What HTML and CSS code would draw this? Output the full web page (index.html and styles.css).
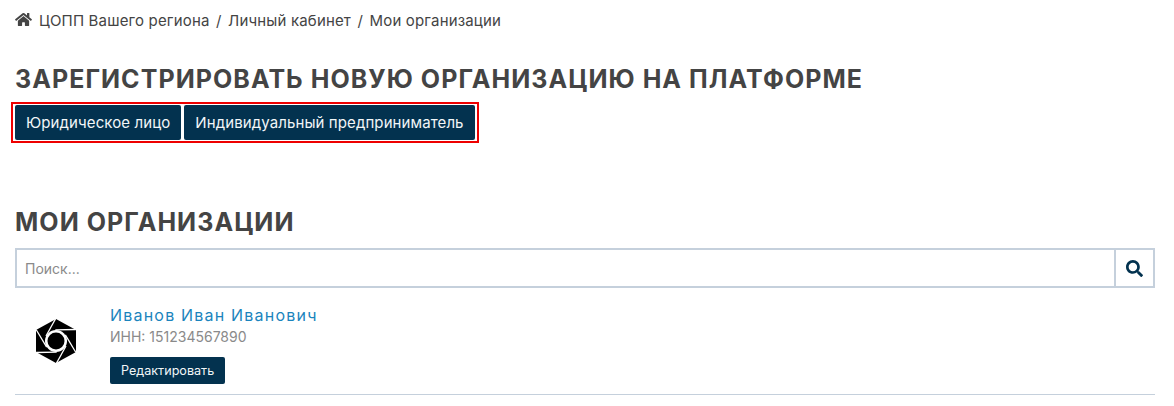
FILE: index.html
```html
<!DOCTYPE html>
<html lang="ru">
<head>
    <meta charset="UTF-8">
    <title>Мои организации</title>
    <link rel="stylesheet" href="styles.css">
</head>
<body>
    <div class="container">
        <nav class="breadcrumb">
            <svg class="home-icon" viewBox="0 0 576 512"><path d="M280.37 148.26L96 300.11V464a16 16 0 0 0 16 16l112.06-.29a16 16 0 0 0 15.92-16V368a16 16 0 0 1 16-16h64a16 16 0 0 1 16 16v95.64a16 16 0 0 0 16 16.05L464 480a16 16 0 0 0 16-16V300L295.67 148.26a12.19 12.19 0 0 0-15.3 0zM571.6 251.47L488 182.56V44.05a12 12 0 0 0-12-12h-56a12 12 0 0 0-12 12v72.61L318.47 43a48 48 0 0 0-61 0L4.34 251.47a12 12 0 0 0-1.6 16.9l25.5 31A12 12 0 0 0 45.15 301l235.22-193.74a12.19 12.19 0 0 1 15.3 0L530.9 301a12 12 0 0 0 16.9-1.6l25.5-31a12 12 0 0 0-1.7-16.93z"/></svg>
            <a href="#">ЦОПП Вашего региона</a>
            <span class="sep">/</span>
            <a href="#">Личный кабинет</a>
            <span class="sep">/</span>
            <span>Мои организации</span>
        </nav>

        <h2 class="title">Зарегистрировать новую организацию на платформе</h2>
        <div class="register-box">
            <a href="#" class="btn">Юридическое лицо</a>
            <a href="#" class="btn">Индивидуальный предприниматель</a>
        </div>

        <h2 class="title title-orgs">Мои организации</h2>
        <form class="search">
            <input type="text" class="search-input" placeholder="Поиск...">
            <button type="button" class="search-btn">
                <svg viewBox="0 0 512 512"><path d="M505 442.7L405.3 343c-4.5-4.5-10.6-7-17-7H372c27.6-35.3 44-79.7 44-128C416 93.1 322.9 0 208 0S0 93.1 0 208s93.1 208 208 208c48.3 0 92.7-16.4 128-44v16.3c0 6.4 2.5 12.5 7 17l99.7 99.7c9.4 9.4 24.6 9.4 33.9 0l28.3-28.3c9.4-9.4 9.4-24.6.1-34zM208 336c-70.7 0-128-57.2-128-128 0-70.7 57.2-128 128-128 70.7 0 128 57.2 128 128 0 70.7-57.2 128-128 128z"/></svg>
            </button>
        </form>

        <div class="org">
            <svg class="org-logo" viewBox="-23 -23 46 46">
                <polygon points="0,-22 20,-11 20,11 0,22 -20,11 -20,-11"/>
                <circle r="11" fill="#fff"/>
                <circle r="8.5"/>
                <g stroke="#fff" stroke-width="1.3">
                    <line x1="0" y1="-23" x2="-10" y2="-5"/>
                    <line x1="0" y1="-23" x2="-10" y2="-5" transform="rotate(60)"/>
                    <line x1="0" y1="-23" x2="-10" y2="-5" transform="rotate(120)"/>
                    <line x1="0" y1="-23" x2="-10" y2="-5" transform="rotate(180)"/>
                    <line x1="0" y1="-23" x2="-10" y2="-5" transform="rotate(240)"/>
                    <line x1="0" y1="-23" x2="-10" y2="-5" transform="rotate(300)"/>
                </g>
            </svg>
            <div class="org-info">
                <a href="#" class="org-name">Иванов Иван Иванович</a>
                <div class="org-inn">ИНН: 151234567890</div>
                <a href="#" class="btn btn-small">Редактировать</a>
            </div>
        </div>
    </div>
</body>
</html>
```

FILE: styles.css
```css
body {
    margin: 0;
    font-family: "Inter", "Noto Sans", sans-serif;
    color: #444;
    background: white;
}
.container {
    padding: 10px 19px 0 15px;
}
.breadcrumb {
    display: flex;
    align-items: center;
    height: 20px;
    font-size: 15px;
    letter-spacing: 0.16px;
}
.breadcrumb a {
    color: #444;
    text-decoration: none;
}
.home-icon {
    width: 17px;
    height: 15px;
    margin-right: 7px;
    margin-top: -1px;
    fill: #444;
}
.sep {
    margin: 0 6.5px;
}
.title {
    margin: 0;
    font-size: 25px;
    line-height: 30px;
    font-weight: 700;
    letter-spacing: 1.05px;
    text-transform: uppercase;
    color: #444;
    margin-top: 34px;
}
.title-orgs {
    margin-top: 64px;
}
.register-box {
    display: inline-flex;
    gap: 3px;
    margin: 8px 0 0 -4px;
    padding: 1px 2px;
    border: 2px solid #ee0000;
}
.btn {
    display: block;
    padding: 0 11px;
    line-height: 35px;
    font-size: 15px;
    letter-spacing: 0.1px;
    color: #f2f6f8;
    background: #03324f;
    border-radius: 2px;
    text-decoration: none;
}
.search {
    display: flex;
    height: 40px;
    margin-top: 11px;
    border: 2px solid #c5d0dc;
    box-sizing: border-box;
}
.search-input {
    flex: 1;
    min-width: 0;
    padding: 0 8px;
    border: none;
    outline: none;
    font-family: inherit;
    font-size: 14px;
}
.search-input::placeholder {
    color: #8a8a8a;
}
.search-btn {
    width: 39px;
    padding: 0;
    border: none;
    border-left: 2px solid #c5d0dc;
    background: white;
}
.search-btn svg {
    display: block;
    width: 17px;
    height: 17px;
    margin: 0 auto;
    fill: #03324f;
}
.org {
    display: flex;
    gap: 31px;
    padding: 17px 0 10px 18px;
    border-bottom: 1px solid #c5d0dc;
}
.org-logo {
    width: 46px;
    height: 46px;
    margin-top: 13px;
}
.org-name {
    display: block;
    font-size: 16px;
    line-height: 20px;
    letter-spacing: 1.2px;
    color: #1b84bd;
    text-decoration: none;
}
.org-inn {
    margin-top: 2px;
    font-size: 14px;
    line-height: 20px;
    color: #8a8a8a;
}
.btn-small {
    display: inline-block;
    margin-top: 10px;
    padding: 0 11px;
    line-height: 27px;
    font-size: 12.6px;
    letter-spacing: 0;
}
```
